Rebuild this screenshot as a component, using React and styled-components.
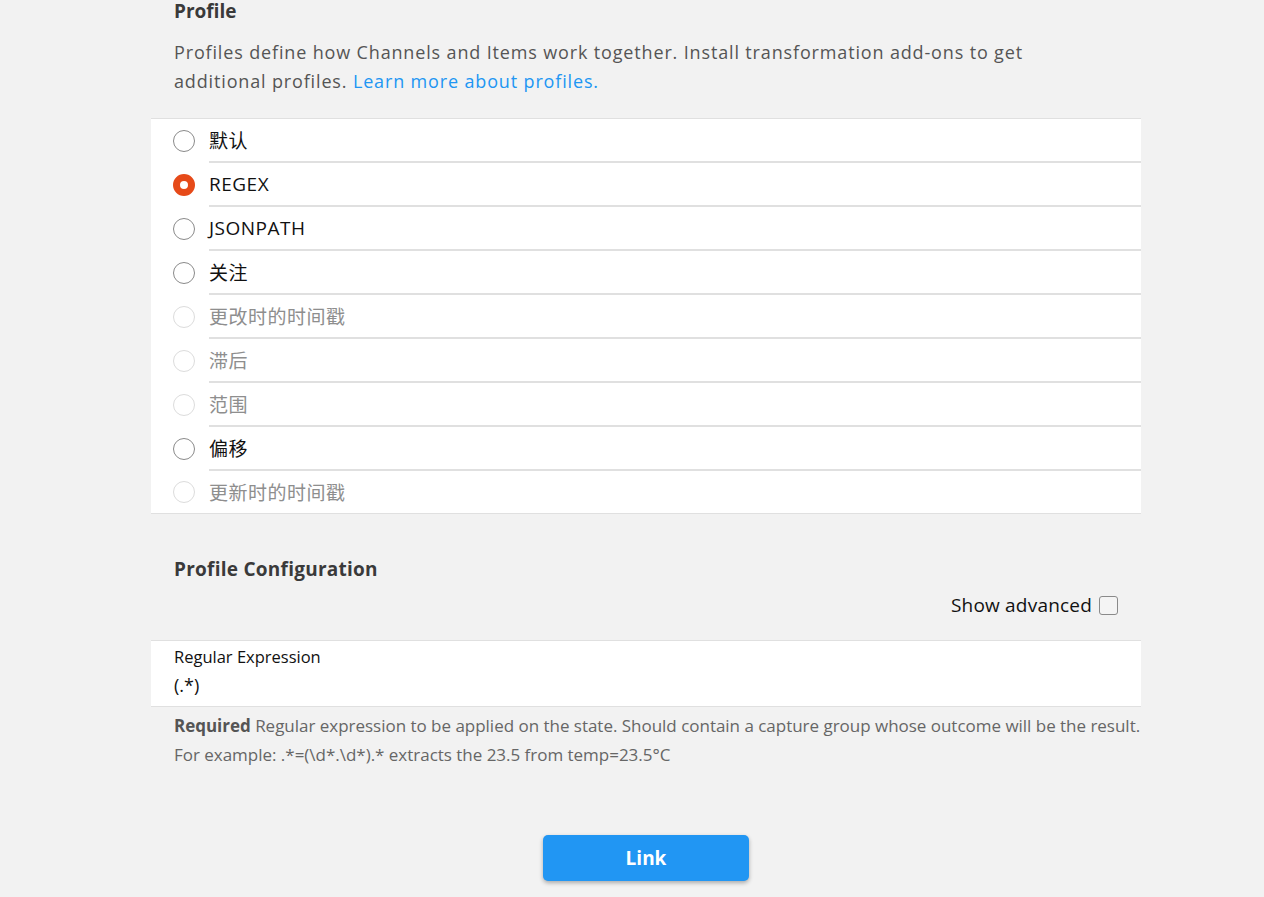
import React from "react";
import styled, { createGlobalStyle } from "styled-components";

const GlobalStyle = createGlobalStyle`
  body {
    margin: 0;
    background: #f2f2f2;
    font-family: "Open Sans", "Noto Sans", "Noto Sans CJK SC", sans-serif;
    color: #000;
  }
`;

const Page = styled.div`
  width: 990px;
  margin-left: 151px;
  padding-bottom: 16px;
`;

const BlockTitle = styled.h2`
  margin: 0;
  padding: 0 23px;
  height: 22px;
  line-height: 22px;
  font-size: 19px;
  font-weight: 700;
  color: #3a3a3a;
  letter-spacing: ${(p) => p.$spacing || 0}px;
  margin-top: ${(p) => p.$top || 0}px;
`;

const Block = styled.div`
  padding: 0 23px;
  max-width: 880px;
  margin-top: 16px;
  font-size: 18px;
  line-height: 29px;
  color: #555;
  letter-spacing: 0.85px;
`;

const DocLink = styled.a`
  color: #2196f3;
  text-decoration: none;
`;

const List = styled.ul`
  list-style: none;
  margin: ${(p) => p.$top || 0}px 0 0;
  padding: 0;
  background: #fff;
  border-top: 1px solid #e0e0e0;
  border-bottom: 1px solid #e0e0e0;
`;

const RadioRow = styled.li`
  display: flex;
  align-items: center;
  height: ${(p) => (p.$last ? 42 : 44)}px;
  padding-left: 22px;
  cursor: ${(p) => (p.$disabled ? "default" : "pointer")};
`;

const Radio = styled.span`
  flex: none;
  box-sizing: border-box;
  width: 22px;
  height: 22px;
  border-radius: 50%;
  border: ${(p) =>
    p.$checked
      ? "7px solid #e64a19"
      : p.$disabled
      ? "1.5px solid #dcdcdc"
      : "1.5px solid #8a8a8a"};
  background: #fff;
`;

const RowInner = styled.div`
  flex: 1;
  align-self: stretch;
  display: flex;
  align-items: center;
  margin-left: 14px;
  border-bottom: ${(p) => (p.$last ? "none" : "2px solid #e0e0e0")};
  box-sizing: border-box;
  font-size: 19px;
  color: ${(p) => (p.$disabled ? "#8e8e8e" : "#111")};
  font-family: "Open Sans", "Noto Sans CJK SC", sans-serif;
  letter-spacing: 0.5px;
`;

const AdvancedRow = styled.div`
  display: flex;
  justify-content: flex-end;
  align-items: center;
  gap: 7px;
  padding-right: 23px;
  margin-top: 14px;
  height: 22px;
  font-size: 19px;
  color: #111;
  letter-spacing: 0.2px;
`;

const Checkbox = styled.span`
  box-sizing: border-box;
  width: 19px;
  height: 19px;
  border: 1.5px solid #8a8a8a;
  border-radius: 3px;
  background: #f4f4f4;
`;

const ParamItem = styled.li`
  padding: 5px 23px 6px;
  height: 65px;
  box-sizing: border-box;
`;

const ParamLabel = styled.div`
  font-size: 16.5px;
  line-height: 22px;
  color: #111;
`;

const ParamValue = styled.div`
  margin-top: 2px;
  font-size: 18px;
  line-height: 30px;
  color: #111;
`;

const Info = styled.div`
  padding: 4px 0 0 23px;
  font-size: 17px;
  line-height: 29px;
  color: #666;
  letter-spacing: -0.02px;

  b {
    color: #555;
    font-weight: 700;
  }
`;

const ButtonBar = styled.div`
  display: flex;
  justify-content: center;
  margin-top: 66px;
`;

const LinkButton = styled.button`
  width: 206px;
  height: 46px;
  border: none;
  border-radius: 5px;
  background: #2196f3;
  color: #fff;
  font-family: "Open Sans", sans-serif;
  font-size: 19px;
  font-weight: 700;
  box-shadow: 0 2px 4px rgba(0, 0, 0, 0.3);
  cursor: pointer;
`;

const profiles = [
  { label: "默认" },
  { label: "REGEX", checked: true },
  { label: "JSONPATH" },
  { label: "关注" },
  { label: "更改时的时间戳", disabled: true },
  { label: "滞后", disabled: true },
  { label: "范围", disabled: true },
  { label: "偏移" },
  { label: "更新时的时间戳", disabled: true },
];

export default function App() {
  return (
    <>
      <GlobalStyle />
      <Page>
        <BlockTitle>Profile</BlockTitle>
        <Block>
          Profiles define how Channels and Items work together. Install
          transformation add-ons to get additional profiles.{" "}
          <DocLink href="#">Learn more about profiles.</DocLink>
        </Block>
        <List $top={22}>
          {profiles.map((p, i) => {
            const last = i === profiles.length - 1;
            return (
              <RadioRow key={p.label} $disabled={p.disabled} $last={last}>
                <Radio $checked={p.checked} $disabled={p.disabled} />
                <RowInner $disabled={p.disabled} $last={last}>
                  {p.label}
                </RowInner>
              </RadioRow>
            );
          })}
        </List>
        <BlockTitle $top={44} $spacing={0.25}>
          Profile Configuration
        </BlockTitle>
        <AdvancedRow>
          Show advanced
          <Checkbox />
        </AdvancedRow>
        <List $top={24}>
          <ParamItem>
            <ParamLabel>Regular Expression</ParamLabel>
            <ParamValue>(.*)</ParamValue>
          </ParamItem>
        </List>
        <Info>
          <b>Required</b> Regular expression to be applied on the state. Should
          contain a capture group whose outcome will be the result.
          <br />
          For example: .*=(\d*.\d*).* extracts the 23.5 from temp=23.5°C
        </Info>
        <ButtonBar>
          <LinkButton>Link</LinkButton>
        </ButtonBar>
      </Page>
    </>
  );
}
